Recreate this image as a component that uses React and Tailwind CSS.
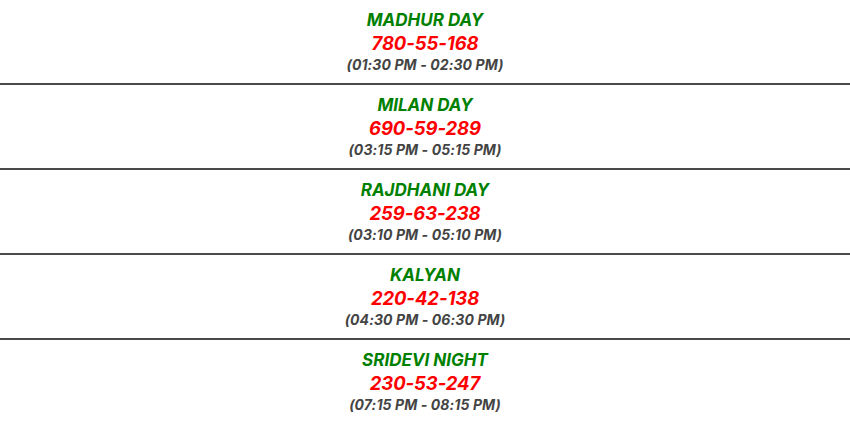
const results = [
  { name: "MADHUR DAY", num: "780-55-168", time: "(01:30 PM - 02:30 PM)" },
  { name: "MILAN DAY", num: "690-59-289", time: "(03:15 PM - 05:15 PM)" },
  { name: "RAJDHANI DAY", num: "259-63-238", time: "(03:10 PM - 05:10 PM)" },
  { name: "KALYAN", num: "220-42-138", time: "(04:30 PM - 06:30 PM)" },
  { name: "SRIDEVI NIGHT", num: "230-53-247", time: "(07:15 PM - 08:15 PM)" },
];

export default function App() {
  return (
    <div
      className="w-[850px] bg-white italic font-bold"
      style={{ fontFamily: "Inter, 'Noto Sans', sans-serif" }}
    >
      {results.map((r) => (
        <div
          key={r.name}
          className="h-[85px] flex flex-col items-center pt-[9px] border-b-2 border-[#4a4a4a]"
        >
          <div className="text-[17px] leading-[22px] text-[#008000]">{r.name}</div>
          <div className="text-[18.5px] leading-[24px] text-[#ff0000] tracking-[-0.1px]">{r.num}</div>
          <div className="text-[14px] leading-[20px] text-[#444] tracking-[0.1px]">{r.time}</div>
        </div>
      ))}
    </div>
  );
}
